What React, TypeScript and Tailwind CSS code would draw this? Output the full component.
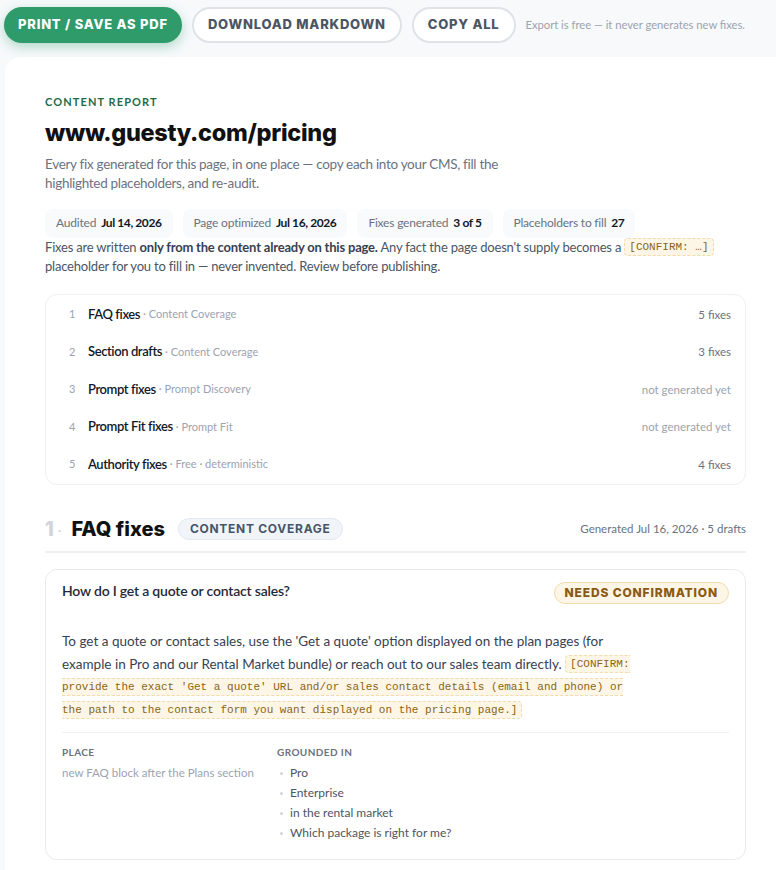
import { ReactNode } from 'react';

const sans = { fontFamily: 'Lato, "Noto Sans", sans-serif' };
const display = { fontFamily: 'Inter, "Noto Sans", sans-serif' };

const stats = [
  { label: 'Audited', value: 'Jul 14, 2026' },
  { label: 'Page optimized', value: 'Jul 16, 2026' },
  { label: 'Fixes generated', value: '3 of 5' },
  { label: 'Placeholders to fill', value: '27' },
];

const sections = [
  { n: 1, title: 'FAQ fixes', tag: 'Content Coverage', status: '5 fixes', done: true },
  { n: 2, title: 'Section drafts', tag: 'Content Coverage', status: '3 fixes', done: true },
  { n: 3, title: 'Prompt fixes', tag: 'Prompt Discovery', status: 'not generated yet', done: false },
  { n: 4, title: 'Prompt Fit fixes', tag: 'Prompt Fit', status: 'not generated yet', done: false },
  { n: 5, title: 'Authority fixes', tag: 'Free · deterministic', status: '4 fixes', done: true },
];

const grounded = ['Pro', 'Enterprise', 'in the rental market', 'Which package is right for me?'];

// inline [CONFIRM: …] chip; align-top keeps it from growing the line box
const Placeholder = ({ children }: { children: ReactNode }) => (
  <code className="align-top font-['Liberation_Mono',monospace] text-[11px] tracking-normal text-[#8a6414] bg-[#fdf6e7] border border-dashed border-[#f1dcae] rounded px-1 py-[2px]">
    {children}
  </code>
);

const ToolbarButton = ({ children, primary }: { children: ReactNode; primary?: boolean }) => (
  <button
    className={
      primary
        ? 'h-9 px-[14px] rounded-full bg-[#2f9a6a] text-white text-[13px] font-extrabold tracking-[0.06em] shadow-[0_4px_12px_rgba(47,154,106,0.35)]'
        : 'h-9 px-[14px] rounded-full bg-white border-2 border-[#dfe3e8] text-[#4b5563] text-[13px] font-extrabold tracking-[0.06em]'
    }
    style={display}
  >
    {children}
  </button>
);

export default function App() {
  return (
    <div className="min-h-screen bg-[#f7f9fb] text-[#111827]" style={sans}>
      <div className="flex items-center gap-[10px] px-[4px] pt-[7px] pb-[14px]">
        <ToolbarButton primary>PRINT / SAVE AS PDF</ToolbarButton>
        <ToolbarButton>DOWNLOAD MARKDOWN</ToolbarButton>
        <ToolbarButton>COPY ALL</ToolbarButton>
        <span className="text-[11.2px] text-[#9ca3af]">Export is free — it never generates new fixes.</span>
      </div>

      <div className="ml-[5px] bg-white rounded-tl-2xl pl-10 pr-[30px] pt-[37px] pb-10">
        <div className="text-[11px] font-bold tracking-[0.1em] text-[#1f6b47]">CONTENT REPORT</div>
        <h1 className="mt-[8px] text-[23.5px] font-extrabold leading-7 tracking-[-0.3px] text-[#111111]" style={display}>
          www.guesty.com/pricing
        </h1>
        <p className="mt-[8px] text-[13.5px] leading-[19px] tracking-[-0.3px] text-[#6b7280] max-w-[458px]">
          Every fix generated for this page, in one place — copy each into your CMS, fill the highlighted placeholders, and re-audit.
        </p>

        <div className="mt-[16px] flex gap-[10px]">
          {stats.map((s) => (
            <div key={s.label} className="h-[29px] px-[11px] rounded-lg bg-[#f8fafc] flex items-center gap-[5px] text-[12px] tracking-[-0.2px]">
              <span className="text-[#6b7280]">{s.label}</span>
              <span className="font-bold tracking-[-0.4px] text-[#111827]">{s.value}</span>
            </div>
          ))}
        </div>

        <p className="text-[13px] leading-[19px] tracking-[-0.2px] text-[#4b5563]">
          Fixes are written <b className="text-[#374151]">only from the content already on this page.</b> Any fact the page
          doesn't supply becomes a <Placeholder>[CONFIRM: …]</Placeholder> placeholder for you to fill in — never invented.
          Review before publishing.
        </p>

        <div className="mt-[18px] rounded-xl border border-[#eef0f3] pl-[23px] pr-[14px] py-px">
          {sections.map((s) => (
            <div key={s.n} className="h-[37.5px] flex items-center">
              <span className="w-[19px] text-[11px] text-[#9ca3af]">{s.n}</span>
              <span className="text-[13px] font-semibold tracking-[-0.4px] text-[#111827]">{s.title}</span>
              <span className="ml-[3px] text-[11px] text-[#9ca3af]">· {s.tag}</span>
              <span className={`ml-auto text-[11.5px] ${s.done ? 'text-[#6b7280]' : 'text-[#9ca3af]'}`}>{s.status}</span>
            </div>
          ))}
        </div>

        <div className="mt-[29px] flex items-center pb-[7px] border-b-2 border-[#eef0f2]">
          <span className="text-[20px] font-extrabold text-[#d1d5db]" style={display}>1</span>
          <span className="ml-[4px] text-[14px] text-[#d1d5db]">·</span>
          <h2 className="ml-[10px] text-[20px] leading-7 font-extrabold text-[#111111]" style={display}>FAQ fixes</h2>
          <span
            className="ml-[13px] h-[22px] px-[11px] rounded-full bg-[#f1f5f9] border border-[#e2e8f0] flex items-center text-[12px] font-bold tracking-[0.06em] text-[#475569]"
            style={display}
          >
            CONTENT COVERAGE
          </span>
          <span className="ml-auto text-[11.5px] text-[#6b7280]">Generated Jul 16, 2026 · 5 drafts</span>
        </div>

        <div className="mt-[16px] rounded-xl border border-[#e8eaee] px-4 pt-[11px] pb-[16px]">
          <div className="flex items-start justify-between">
            <div className="text-[14px] leading-5 font-semibold tracking-[-0.2px] text-[#1f2937]">How do I get a quote or contact sales?</div>
            <span
              className="mt-px h-[22px] px-[10px] rounded-full bg-[#fdf6e7] border border-[#f1dcae] flex items-center text-[12px] font-extrabold tracking-[0.07em] text-[#8a5a12]"
              style={display}
            >
              NEEDS CONFIRMATION
            </span>
          </div>

          <p className="mt-[26px] text-[13.5px] leading-[23px] text-[#374151] max-w-[570px]">
            To get a quote or contact sales, use the 'Get a quote' option displayed on the plan pages (for example in Pro and
            our Rental Market bundle) or reach out to our sales team directly.{' '}
            <Placeholder>
              [CONFIRM: provide the exact 'Get a quote' URL and/or sales contact details (email and phone) or the path to the
              contact form you want displayed on the pricing page.]
            </Placeholder>
          </p>

          <div className="mt-[10px] pt-[12px] border-t border-[#f0f1f3] flex gap-[15px]">
            <div className="w-[200px]">
              <div className="text-[10px] leading-[15px] font-bold tracking-[0.04em] text-[#6b7280]">PLACE</div>
              <div className="mt-[3px] h-5 flex items-center whitespace-nowrap text-[11.5px] text-[#9ca3af]">
                new FAQ block after the Plans section
              </div>
            </div>
            <div>
              <div className="text-[10px] leading-[15px] font-bold tracking-[0.04em] text-[#6b7280]">GROUNDED IN</div>
              <ul className="mt-[3px]">
                {grounded.map((g) => (
                  <li key={g} className="flex items-center h-5 text-[12px] text-[#4b5563]">
                    <span className="w-[3px] h-[3px] rounded-full bg-[#d1d5db] ml-[3px] mr-[7px]" />
                    {g}
                  </li>
                ))}
              </ul>
            </div>
          </div>
        </div>
      </div>
    </div>
  );
}
